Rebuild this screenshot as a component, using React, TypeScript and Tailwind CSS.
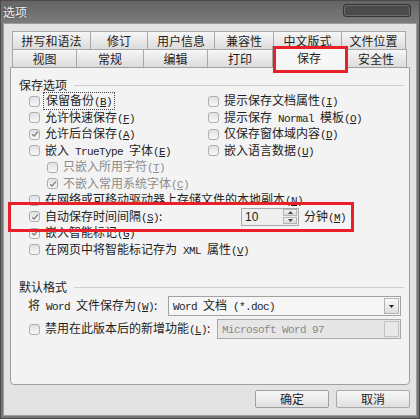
import type { ReactNode } from 'react';

const mono = "font-['Liberation_Mono',monospace] text-[11px] tracking-[-0.6px] whitespace-pre";

function K({ k }: { k: string }) {
  return (
    <span className={mono}>
      (<span className="underline underline-offset-[1px]">{k}</span>)
    </span>
  );
}

function M({ children }: { children: ReactNode }) {
  return <span className={mono}>{children}</span>;
}

function Box({ checked }: { checked?: boolean }) {
  return (
    <span className="w-[11px] h-[11px] shrink-0 rounded-[3px] border border-[#adadad] bg-gradient-to-b from-[#e2e2e2] to-[#f7f7f7] flex items-center justify-center">
      {checked && (
        <svg width="8" height="8" viewBox="0 0 8 8">
          <path d="M1.2 4.2 L3.1 6.1 L6.8 1.6" stroke="#7a7a7a" strokeWidth="1.3" fill="none" />
        </svg>
      )}
    </span>
  );
}

function Row({ children, checked, dim, indent }: { children: ReactNode; checked?: boolean; dim?: boolean; indent?: boolean }) {
  return (
    <div className={`h-[16.5px] flex items-center gap-[5px] ${indent ? 'pl-[18px]' : ''} ${dim ? 'text-[#8c8c8c]' : ''}`}>
      <Box checked={checked} />
      <span className="whitespace-nowrap">{children}</span>
    </div>
  );
}

const row1 = [
  ['拼写和语法', 79],
  ['修订', 58],
  ['用户信息', 68],
  ['兼容性', 60],
  ['中文版式', 69],
  ['文件位置', 65],
] as const;

const row2 = [
  ['视图', 65],
  ['常规', 68],
  ['编辑', 65],
  ['打印', 66],
  ['保存', 74],
  ['安全性', 62],
] as const;

function Tab({ label, w, first, active }: { label: string; w: number; first: boolean; active?: boolean }) {
  if (active) {
    return (
      <div
        style={{ width: w }}
        className="relative z-10 -ml-px -mt-[3px] h-[22px] border border-b-0 border-[#a3a3a3] bg-[#f7f7f7] flex items-center justify-center"
      >
        {label}
      </div>
    );
  }
  return (
    <div
      style={{ width: w }}
      className={`h-[19px] border border-[#a8a8a8] bg-gradient-to-b from-[#f6f6f6] to-[#dcdcdc] flex items-center justify-center ${first ? '' : '-ml-px'}`}
    >
      {label}
    </div>
  );
}

function Spin() {
  return (
    <div className="w-[58px] h-[18px] border border-[#a9a9a9] bg-[#efefef] flex items-center justify-between pl-[3px] pr-px">
      <span className="font-['Liberation_Sans',sans-serif] text-[12px]">10</span>
      <div className="flex flex-col gap-px">
        {[0, 1].map((i) => (
          <div key={i} className="w-[14px] h-[7px] border border-[#b5b5b5] bg-gradient-to-b from-[#f4f4f4] to-[#d9d9d9] flex items-center justify-center">
            <svg width="5" height="3" viewBox="0 0 5 3">
              <path d={i === 0 ? 'M0 3 L2.5 0 L5 3 Z' : 'M0 0 L2.5 3 L5 0 Z'} fill="#444" />
            </svg>
          </div>
        ))}
      </div>
    </div>
  );
}

export default function App() {
  return (
    <div className="relative w-[420px] h-[419px] flex flex-col bg-[#767676] border border-[#4a4a4a] text-[12px] leading-none text-[#1e1e1e] font-['Noto_Sans_CJK_SC','Noto_Sans',sans-serif] overflow-hidden">
      <div className="h-[22px] shrink-0 flex items-center justify-between pl-[2px] pr-[8px] bg-gradient-to-b from-[#646464] to-[#7c7c7c]">
        <span className="text-[#f2f2f2] text-[12px] [text-shadow:0_0_2px_#333]">选项</span>
        <div className="w-[68px] h-[13px] -mt-[4px] rounded-[3px] border border-[#333] bg-[#4b4b4b] shadow-[inset_0_0_0_1px_#6a6a6a]" />
      </div>

      <div className="flex-1 mx-[2px] mb-[2px] bg-[#e3e3e3] border border-[#9c9c9c] px-[6px] pt-[7px] flex flex-col">
        <div className="ml-[2px] flex">
          {row1.map(([l, w], i) => (
            <Tab key={l} label={l} w={w} first={i === 0} />
          ))}
        </div>
        <div className="ml-[2px] -mt-px flex items-start">
          {row2.map(([l, w], i) => (
            <Tab key={l} label={l} w={w} first={i === 0} active={l === '保存'} />
          ))}
        </div>

        <div className="-mt-px h-[318px] border border-[#a0a0a0] rounded-b-[4px] bg-[#f3f3f3] px-[8px] pt-[10px]">
          <div className="h-[14px] flex items-center gap-[7px]">
            <span>保存选项</span>
            <div className="flex-1 h-px bg-[#cfcfcf] mr-[-3px]" />
          </div>
          <div className="ml-[10px]">
            <div className="grid grid-cols-[179px_1fr] mt-px">
              <div className="h-[16.5px] flex items-center gap-[5px]">
                <Box />
                <span className="outline outline-1 outline-dotted outline-[#444] outline-offset-[1px] px-px">
                  保留备份<K k="B" />
                </span>
              </div>
              <Row>
                提示保存文档属性<K k="I" />
              </Row>
              <Row>
                允许快速保存<K k="F" />
              </Row>
              <Row>
                提示保存<M> Normal </M>模板<K k="O" />
              </Row>
              <Row checked>
                允许后台保存<K k="A" />
              </Row>
              <Row>
                仅保存窗体域内容<K k="D" />
              </Row>
              <Row>
                嵌入<M> TrueType </M>字体<K k="E" />
              </Row>
              <Row>
                嵌入语言数据<K k="U" />
              </Row>
            </div>
            <Row dim indent>
              只嵌入所用字符<K k="T" />
            </Row>
            <Row dim indent checked>
              不嵌入常用系统字体<K k="C" />
            </Row>
            <Row>
              在网络或可移动驱动器上存储文件的本地副本<K k="N" />
            </Row>
            <div className="h-[16.5px] flex items-center gap-[5px]">
              <Box checked />
              <span className="w-[191px] whitespace-nowrap">
                自动保存时间间隔<K k="S" />:
              </span>
              <Spin />
              <span className="whitespace-nowrap">
                分钟<K k="M" />
              </span>
            </div>
            <Row checked>
              嵌入智能标记<K k="G" />
            </Row>
            <Row>
              在网页中将智能标记存为<M> XML </M>属性<K k="V" />
            </Row>
          </div>

          <div className="mt-[22px] h-[14px] flex items-center gap-[7px]">
            <span>默认格式</span>
            <div className="flex-1 h-px bg-[#cfcfcf] mr-[-3px]" />
          </div>
          <div className="mt-[2px] ml-[9px] h-[20px] flex items-center">
            <span className="w-[140px] whitespace-nowrap">
              将<M> Word </M>文件保存为<K k="W" />:
            </span>
            <div className="flex-1 h-[20px] border border-[#a2a2a2] bg-[#f6f6f6] flex items-center justify-between pl-[4px] pr-px">
              <span>
                <M>Word </M>文档<M> (*.doc)</M>
              </span>
              <div className="w-[15px] h-[16px] border border-[#b3b3b3] bg-gradient-to-b from-[#fafafa] to-[#dedede] flex items-center justify-center">
                <svg width="5" height="3" viewBox="0 0 5 3">
                  <path d="M0 0 L2.5 3 L5 0 Z" fill="#222" />
                </svg>
              </div>
            </div>
          </div>
          <div className="mt-[3px] ml-[10px] h-[20px] flex items-center gap-[5px]">
            <Box />
            <span className="w-[167px] whitespace-nowrap">
              禁用在此版本后的新增功能<K k="L" />:
            </span>
            <div className="flex-1 h-[20px] border border-[#a9a9a9] bg-[#e6e6e6] flex items-center justify-between pl-[4px] pr-px">
              <span className="text-[#8a8a8a]">
                <M>Microsoft Word 97</M>
              </span>
              <div className="w-[15px] h-[16px] border border-[#c2c2c2] bg-[#e8e8e8]" />
            </div>
          </div>
        </div>

        <div className="mt-[5px] flex justify-end gap-[7px]">
          <button className="w-[74px] h-[18px] border border-[#9f9f9f] rounded-[2px] bg-gradient-to-b from-[#f7f7f7] to-[#e0e0e0] flex items-center justify-center">
            确定
          </button>
          <button className="w-[74px] h-[18px] border border-[#a9a9a9] rounded-[2px] bg-gradient-to-b from-[#f7f7f7] to-[#e0e0e0] flex items-center justify-center">
            取消
          </button>
        </div>
      </div>

      <div className="absolute left-[272px] top-[45px] w-[75px] h-[27px] border-[3px] border-[#e8202a] z-20" />
      <div className="absolute left-[7px] top-[201px] w-[346px] h-[30px] border-[3px] border-[#e8202a] z-20" />
    </div>
  );
}
